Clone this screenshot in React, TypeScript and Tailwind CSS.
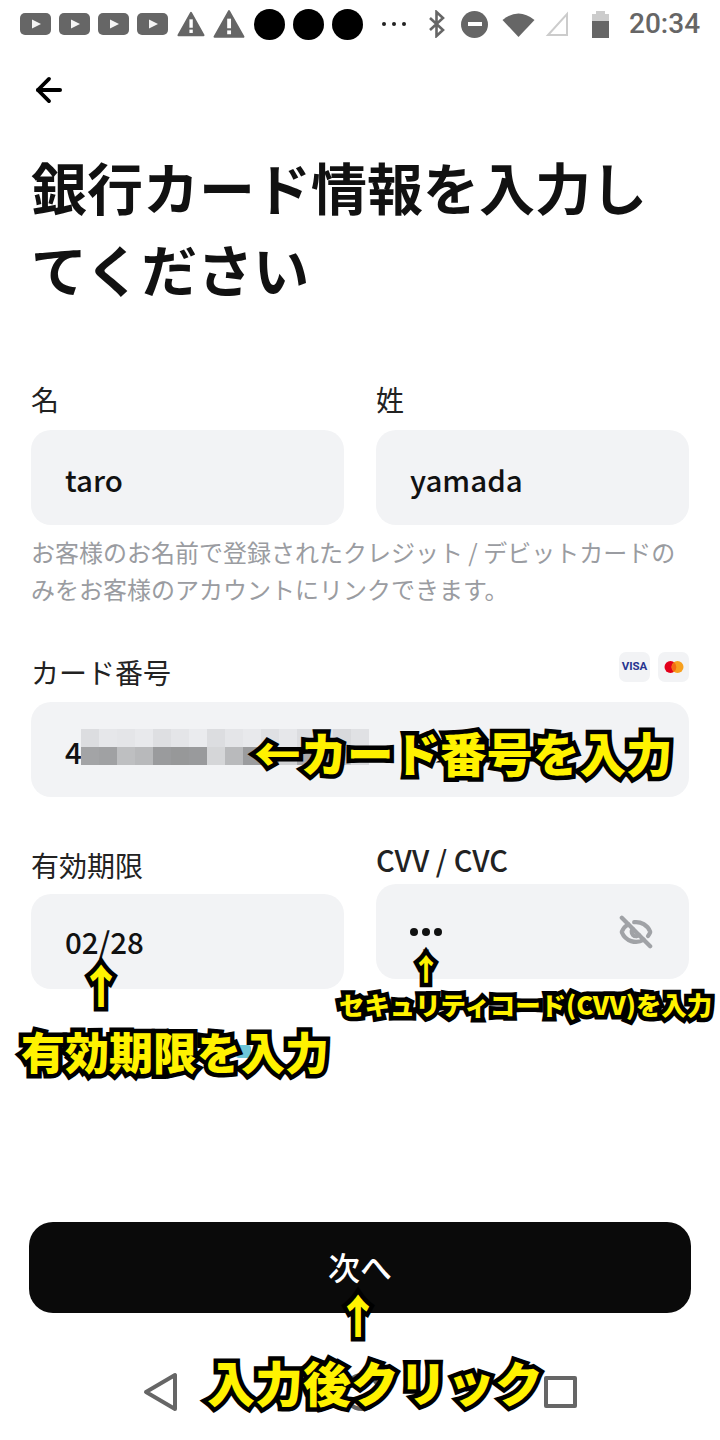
import { ArrowLeft, EyeOff } from 'lucide-react';

const font = "font-['Roboto','Noto_Sans_CJK_JP',sans-serif]";
const cjk = "font-['Noto_Sans_CJK_JP',sans-serif]";
const outline = "font-['Noto_Sans_CJK_JP',sans-serif] font-black text-[#fff200] [-webkit-text-stroke:9px_#000] [paint-order:stroke_fill] whitespace-nowrap leading-none";

const mosaic = [
  ['#dcdde0', '#e6e7ea', '#e4e5e8', '#e8e9ec', '#dedfe2', '#e4e5e8', '#eaebee', '#dcdde0', '#e4e5e8', '#e8e9ec', '#dfe0e3', '#e6e7ea', '#dcdde0', '#e2e3e6', '#d8d9dc', '#e0e1e4'],
  ['#a3a4a6', '#a0a1a3', '#bebfc1', '#b8b9bb', '#9a9b9d', '#979899', '#999a9c', '#d5d6d8', '#b9babc', '#9b9c9e', '#a3a4a6', '#cfd0d2', '#aaabad', '#b5b6b8', '#c6c7c9', '#d8d9dc'],
];

function YoutubeIcon() {
  return (
    <svg width="31" height="22" viewBox="0 0 31 22">
      <rect width="31" height="22" rx="5" fill="#666" />
      <path d="M12 6.5 L21 11 L12 15.5 Z" fill="#f4f4f4" />
    </svg>
  );
}

function WarnIcon({ size }: { size: number }) {
  return (
    <svg width={size} height={size} viewBox="0 0 30 28">
      <path d="M15 2 L28.5 26 H1.5 Z" fill="#666" stroke="#666" strokeWidth="2" strokeLinejoin="round" />
      <rect x="13.3" y="9" width="3.6" height="9" fill="#fff" />
      <rect x="13.3" y="20" width="3.6" height="3.6" fill="#fff" />
    </svg>
  );
}

function StatusBar() {
  return (
    <div className={`${font} flex h-[46px] items-center pl-[20px] pt-[2px]`}>
      <div className="flex items-center gap-[8px]">
        <YoutubeIcon />
        <YoutubeIcon />
        <YoutubeIcon />
        <YoutubeIcon />
      </div>
      <div className="ml-[9px] flex items-center gap-[8px]">
        <WarnIcon size={28} />
        <WarnIcon size={32} />
      </div>
      <div className="ml-[9px] flex items-center gap-[8px]">
        <div className="h-[31px] w-[31px] rounded-full bg-black" />
        <div className="h-[31px] w-[31px] rounded-full bg-black" />
        <div className="h-[31px] w-[31px] rounded-full bg-black" />
      </div>
      <div className="ml-[19px] flex items-center gap-[6px]">
        <div className="h-[4px] w-[4px] rounded-full bg-[#222]" />
        <div className="h-[4px] w-[4px] rounded-full bg-[#222]" />
        <div className="h-[4px] w-[4px] rounded-full bg-[#222]" />
      </div>
      <svg className="ml-[22px]" width="18" height="28" viewBox="0 0 18 28" fill="none" stroke="#666" strokeWidth="2.6">
        <path d="M2 8 L15 20 L8.5 26 V2 L15 8 L2 20" />
      </svg>
      <div className="ml-[15px] flex h-[27px] w-[27px] items-center justify-center rounded-full bg-[#666]">
        <div className="h-[4px] w-[14px] bg-white" />
      </div>
      <svg className="ml-[14px]" width="33" height="25" viewBox="0 0 33 25">
        <path d="M0.5 8 Q16.5 -5 32.5 8 L16.5 25 Z" fill="#666" />
      </svg>
      <svg className="ml-[10px]" width="24" height="26" viewBox="0 0 24 26" fill="none" stroke="#ccc" strokeWidth="2">
        <path d="M22 3 V24 H3 Z" />
      </svg>
      <div className="ml-[23px] flex h-[27px] w-[17px] flex-col">
        <div className="mx-auto h-[3px] w-[9px] bg-[#ccc]" />
        <div className="h-[7px] bg-[#ccc]" />
        <div className="flex-1 bg-[#666]" />
      </div>
      <div className="ml-[20px] text-[28px] leading-none font-medium text-[#666]">20:34</div>
    </div>
  );
}

function Field({ value, className = '' }: { value: string; className?: string }) {
  return (
    <div className={`${cjk} flex h-[95px] items-center rounded-[20px] bg-[#f2f3f5] pl-[34px] text-[29.5px] font-medium text-[#111] ${className}`}>
      {value}
    </div>
  );
}

function BottomNav() {
  return (
    <div className="mt-[59px] flex items-center justify-between pl-[143px] pr-[143px]">
      <svg width="36" height="40" viewBox="0 0 36 40" fill="none" stroke="#666" strokeWidth="4" strokeLinejoin="round">
        <path d="M32 3 V37 L3 20 Z" />
      </svg>
      <div className="h-[38px] w-[38px] rounded-full border-[4px] border-[#666]" />
      <div className="h-[32px] w-[33px] rounded-[2px] border-[4px] border-[#666]" />
    </div>
  );
}

export default function App() {
  return (
    <div className={`${font} relative h-[1440px] w-[720px] overflow-hidden bg-white`}>
      <StatusBar />

      <div className="px-[31px]">
        <ArrowLeft className="mt-[25px] -ml-[1px] h-[38px] w-[38px] text-black" strokeWidth={2.4} />

        <h1 className={`${cjk} mt-[36px] text-[56px] leading-[82px] font-bold text-[#111]`}>
          銀行カード情報を入力し<br />てください
        </h1>

        <div className={`${cjk} mt-[70px] grid grid-cols-2 gap-x-[32px] text-[28px] leading-[40px] text-[#222]`}>
          <div>名</div>
          <div>姓</div>
        </div>
        <div className="mt-[11px] grid grid-cols-2 gap-x-[32px]">
          <Field value="taro" className="pt-[4px]" />
          <Field value="yamada" className="pt-[4px]" />
        </div>

        <p className={`${cjk} mt-[8px] text-[24px] leading-[37px] text-[#9a9ca1]`}>
          お客様のお名前で登録されたクレジット / デビットカードの<br />みをお客様のアカウントにリンクできます。
        </p>

        <div className="mt-[45px] flex h-[50px] items-start justify-between">
          <div className={`${cjk} text-[28px] leading-[40px] text-[#222]`}>カード番号</div>
          <div className="flex gap-[8px]">
            <div className="flex h-[30px] w-[31px] items-center justify-center rounded-[7px] bg-[#f2f3f5] text-[11.5px] font-bold text-[#26348f]">VISA</div>
            <div className="flex h-[30px] w-[31px] items-center justify-center rounded-[7px] bg-[#f2f3f5]">
              <svg width="20" height="14" viewBox="0 0 20 14">
                <circle cx="6.5" cy="7" r="6" fill="#e3001b" />
                <circle cx="13.5" cy="7" r="6" fill="#f7a01e" />
                <path d="M10 2.2 A6 6 0 0 1 10 11.8 A6 6 0 0 1 10 2.2" fill="#f46a14" />
              </svg>
            </div>
          </div>
        </div>
        <div className="relative">
          <Field value="4" className="pt-[4px]" />
          <div className="absolute top-[27px] left-[50px] flex flex-col">
            {mosaic.map((row, r) => (
              <div key={r} className="flex">
                {row.map((c, i) => (
                  <div key={i} className="h-[18px] w-[18px]" style={{ backgroundColor: c }} />
                ))}
              </div>
            ))}
          </div>
        </div>

        <div className="mt-[40px] grid grid-cols-2 items-start gap-x-[32px]">
          <div>
            <div className={`${cjk} mt-[8px] text-[28px] leading-[40px] text-[#222]`}>有効期限</div>
            <Field value="02/28" className="mt-[9px]" />
          </div>
          <div>
            <div className={`${cjk} mt-[2px] text-[29px] leading-[40px] font-medium text-[#222]`}>CVV / CVC</div>
            <div className="mt-[5px] flex h-[95px] items-center justify-between rounded-[20px] bg-[#f2f3f5] pr-[36px] pl-[34px]">
              <div className="flex gap-[4px]">
                <div className="h-[8px] w-[8px] rounded-full bg-[#111]" />
                <div className="h-[8px] w-[8px] rounded-full bg-[#111]" />
                <div className="h-[8px] w-[8px] rounded-full bg-[#111]" />
              </div>
              <EyeOff className="h-[34px] w-[34px] text-[#a0a2a6]" strokeWidth={3} />
            </div>
          </div>
        </div>
      </div>

      <div className="mt-[233px] px-[29px]">
        <button className={`${cjk} flex h-[91px] w-full items-center justify-center rounded-[24px] bg-[#0a0a0a] pb-[4px] text-[32px] font-medium text-white`}>
          次へ
        </button>
      </div>
      <BottomNav />

      {/* annotations drawn over the screenshot */}
      <div className="absolute top-[1045px] left-[236px] h-[13px] w-[15px] rounded-[3px] bg-[#6ec6d8]" />
      <div className={`${outline} absolute top-[729px] left-[254px] text-[46.5px]`}>←カード番号を入力</div>
      <div className={`${outline} absolute top-[1029px] left-[21px] text-[44px]`}>有効期限を入力</div>
      <div className={`${outline} absolute top-[992px] left-[339px] text-[25.4px] [-webkit-text-stroke-width:6px]`}>セキュリティコード(CVV)を入力</div>
      <div className={`${outline} absolute top-[1357px] left-[207px] text-[48px]`}>入力後クリック</div>
      <div className={`${outline} absolute top-[960px] left-[78px] text-[46px]`}>↑</div>
      <div className={`${outline} absolute top-[952px] left-[411px] text-[30px] [-webkit-text-stroke-width:6px]`}>↑</div>
      <div className={`${outline} absolute top-[1290px] left-[335px] text-[46px]`}>↑</div>
    </div>
  );
}
